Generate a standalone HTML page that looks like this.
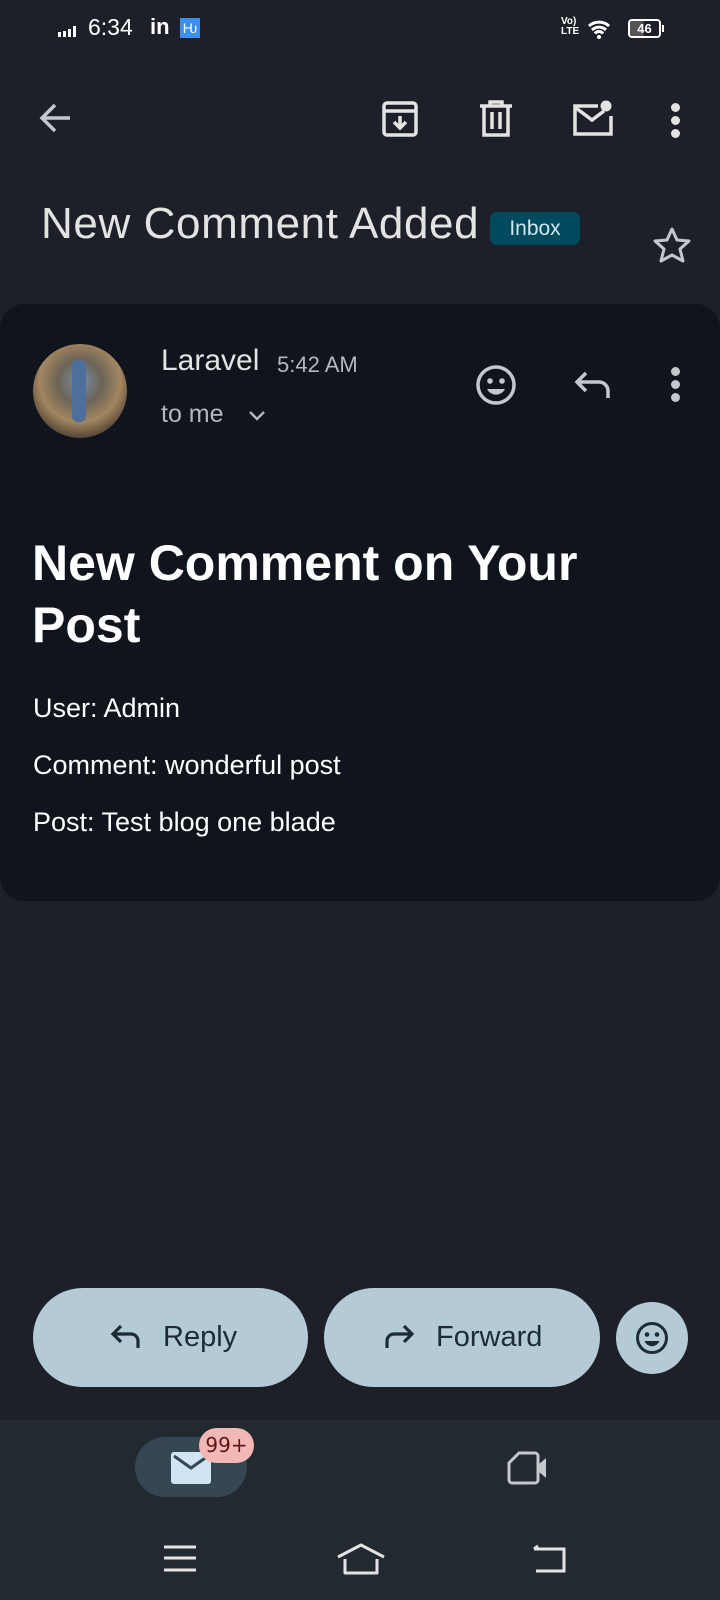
<!DOCTYPE html>
<html><head><meta charset="utf-8"><style>
*{margin:0;padding:0;box-sizing:border-box}
body{width:720px;height:1600px;background:#1d2028;font-family:"Liberation Sans",sans-serif;color:#e3e3e3;position:relative;overflow:hidden}
.a{position:absolute}
svg{position:absolute;overflow:visible}
</style></head><body>
<!-- status bar -->
<div class="a" style="left:58px;top:26px;display:flex;gap:2px;align-items:flex-end">
<i style="width:3px;height:5px;background:#fff"></i><i style="width:3px;height:6px;background:#fff"></i><i style="width:3px;height:8px;background:#fff"></i><i style="width:3px;height:11px;background:#fff"></i></div>
<div class="a" style="left:88px;top:14px;font-size:23px;color:#fff">6:34</div>
<div class="a" style="left:150px;top:14px;font-size:22px;color:#fff;font-weight:bold">in</div>
<div class="a" style="left:180px;top:18px;width:20px;height:20px;background:#3b8ff0;color:#fff;font-size:14px;text-align:center;line-height:20px">Ƕ</div>
<div class="a" style="left:561px;top:17px;font-size:10px;line-height:10px;color:#fff;font-weight:bold">Vo)<br>LTE</div>
<svg style="left:587px;top:18px" width="26" height="22" viewBox="0 0 26 22"><path d="M2 8a15 15 0 0 1 20 0M5 12a10 10 0 0 1 14 0M8 15.5a5 5 0 0 1 8 0" stroke="#fff" stroke-width="3" fill="none"/><circle cx="12" cy="19" r="2" fill="#fff"/></svg>
<div class="a" style="left:628px;top:19px;width:33px;height:19px;border:2px solid #fff;border-radius:4px;font-size:13px;font-weight:bold;color:#fff;text-align:center;line-height:15px;background:linear-gradient(90deg,#555 46%,transparent 46%)">46</div>
<div class="a" style="left:662px;top:25px;width:2px;height:7px;background:#fff"></div>
<!-- toolbar -->
<svg style="left:38px;top:102px" width="34" height="32" viewBox="0 0 34 32"><path d="M32 16H4M17 3L4 16l13 13" stroke="#c4c7cc" stroke-width="3.5" fill="none"/></svg>
<svg style="left:382px;top:101px" width="36" height="36" viewBox="0 0 36 36"><rect x="2" y="2" width="32" height="32" rx="3" stroke="#e3e3e3" stroke-width="3.5" fill="none"/><path d="M2 10h32M18 15v12M12 21l6 6 6-6" stroke="#e3e3e3" stroke-width="3.5" fill="none"/></svg>
<svg style="left:479px;top:101px" width="34" height="36" viewBox="0 0 34 36"><path d="M1 5h32M11 5V1h12v4M5 5v29h24V5M13 11v17M21 11v17" stroke="#e3e3e3" stroke-width="3.5" fill="none"/></svg>
<svg style="left:572px;top:100px" width="42" height="36" viewBox="0 0 42 36"><path d="M26 6H3v28h36V16" stroke="#e3e3e3" stroke-width="3.5" fill="none"/><path d="M4 8l16 12 12-9" stroke="#e3e3e3" stroke-width="3.5" fill="none"/><circle cx="34" cy="6" r="5.5" fill="#e3e3e3"/></svg>
<div class="a" style="left:671px;top:103px;width:9px;height:9px;border-radius:50%;background:#e3e3e3;box-shadow:0 13px 0 #e3e3e3,0 26px 0 #e3e3e3"></div>
<!-- title -->
<div class="a" style="left:41px;top:199px;font-size:44px;letter-spacing:0.6px;color:#e3e3e3">New Comment Added</div>
<div class="a" style="left:490px;top:212px;width:90px;height:33px;background:#004a5e;border-radius:7px;color:#cfe8f0;font-size:21px;text-align:center;line-height:33px">Inbox</div>
<svg style="left:653px;top:227px" width="38" height="36" viewBox="0 0 38 36"><path d="M19 2l5 11 12 1-9 8 3 12-11-6-11 6 3-12-9-8 12-1z" stroke="#c4c7cc" stroke-width="3" fill="none" stroke-linejoin="round"/></svg>
<!-- card -->
<div class="a" style="left:0;top:304px;width:720px;height:597px;background:#10141c;border-radius:24px"></div>
<div class="a" style="left:33px;top:344px;width:94px;height:94px;border-radius:50%;background:radial-gradient(circle at 50% 40%,#7b8da4 0,#6d6457 30%,#a28660 55%,#4a3b30 80%)"></div>
<div class="a" style="left:72px;top:360px;width:14px;height:62px;background:#4e6e9c;border-radius:6px"></div>
<div class="a" style="left:161px;top:344px;font-size:30px;color:#e3e3e3">Laravel</div>
<div class="a" style="left:277px;top:352px;font-size:22px;color:#b4b8bd">5:42 AM</div>
<div class="a" style="left:161px;top:400px;font-size:25px;color:#b4b8bd">to me</div>
<svg style="left:248px;top:410px" width="18" height="12" viewBox="0 0 18 12"><path d="M2 2l7 7 7-7" stroke="#b4b8bd" stroke-width="2.5" fill="none"/></svg>
<svg style="left:475px;top:364px" width="42" height="42" viewBox="0 0 42 42"><circle cx="21" cy="21" r="18" stroke="#c4c7cc" stroke-width="3.5" fill="none"/><circle cx="15" cy="17" r="2.8" fill="#c4c7cc"/><circle cx="27" cy="17" r="2.8" fill="#c4c7cc"/><path d="M12 25a10 10 0 0 0 18 0z" fill="#c4c7cc"/></svg>
<svg style="left:574px;top:370px" width="38" height="30" viewBox="0 0 38 30"><path d="M12 3L3 12l9 9M3 12h22a9 9 0 0 1 9 9v7" stroke="#c4c7cc" stroke-width="3.5" fill="none"/></svg>
<div class="a" style="left:671px;top:367px;width:9px;height:9px;border-radius:50%;background:#c4c7cc;box-shadow:0 13px 0 #c4c7cc,0 26px 0 #c4c7cc"></div>
<div class="a" style="left:32px;top:532px;font-size:50px;line-height:62px;color:#fff;font-weight:bold;width:600px">New Comment on Your<br>Post</div>
<div class="a" style="left:33px;top:693px;font-size:27px;color:#fff">User: Admin</div>
<div class="a" style="left:33px;top:750px;font-size:27px;color:#fff">Comment: wonderful post</div>
<div class="a" style="left:33px;top:807px;font-size:27px;color:#fff">Post: Test blog one blade</div>
<!-- buttons -->
<div class="a" style="left:33px;top:1288px;width:275px;height:99px;border-radius:50px;background:#b4cad6;color:#1d2b35;font-size:29px;line-height:99px;padding-left:130px">Reply</div>
<svg style="left:110px;top:1323px" width="32" height="28" viewBox="0 0 32 28"><path d="M11 3L3 11l8 8M3 11h18a7 7 0 0 1 7 7v7" stroke="#1d2b35" stroke-width="3.2" fill="none"/></svg>
<div class="a" style="left:324px;top:1288px;width:276px;height:99px;border-radius:50px;background:#b4cad6;color:#1d2b35;font-size:29px;line-height:99px;padding-left:112px">Forward</div>
<svg style="left:383px;top:1323px" width="32" height="28" viewBox="0 0 32 28"><path d="M21 3l8 8-8 8M29 11H11a7 7 0 0 0-7 7v7" stroke="#1d2b35" stroke-width="3.2" fill="none"/></svg>
<div class="a" style="left:616px;top:1302px;width:72px;height:72px;border-radius:50%;background:#b4cad6"></div>
<svg style="left:635px;top:1321px" width="34" height="34" viewBox="0 0 34 34"><circle cx="17" cy="17" r="14.5" stroke="#1d2b35" stroke-width="3" fill="none"/><circle cx="12" cy="13.5" r="2.3" fill="#1d2b35"/><circle cx="22" cy="13.5" r="2.3" fill="#1d2b35"/><path d="M9.5 20a8 8 0 0 0 15 0z" fill="#1d2b35"/></svg>
<!-- bottom nav -->
<div class="a" style="left:0;top:1420px;width:720px;height:180px;background:#232930"></div>
<div class="a" style="left:135px;top:1437px;width:112px;height:60px;border-radius:30px;background:#344753"></div>
<div class="a" style="left:171px;top:1452px;width:40px;height:32px;border-radius:3px;background:#d0e4f4"></div>
<svg style="left:171px;top:1452px" width="40" height="20" viewBox="0 0 40 20"><path d="M3 4l17 12 17-12" stroke="#344753" stroke-width="3" fill="none"/></svg>
<div class="a" style="left:199px;top:1428px;width:55px;height:35px;border-radius:18px;background:#f2b8b5;color:#601410;font-size:20px;text-align:center;line-height:35px;font-family:'DejaVu Sans',sans-serif">99+</div>
<svg style="left:507px;top:1451px" width="42" height="34" viewBox="0 0 42 34"><path d="M12 2h16a3 3 0 0 1 3 3v24a3 3 0 0 1-3 3H5a3 3 0 0 1-3-3V12z" stroke="#c4c7cc" stroke-width="3" fill="none"/><path d="M31 14l8-7v20l-8-7z" fill="#c4c7cc"/></svg>
<!-- system nav -->
<svg style="left:163px;top:1545px" width="34" height="28" viewBox="0 0 34 28"><path d="M1 2h32M1 13h32M1 25h32" stroke="#e3e3e3" stroke-width="3" fill="none"/></svg>
<svg style="left:336px;top:1543px" width="50" height="32" viewBox="0 0 50 32"><path d="M2 14L25 2l23 12M9 16v14h32V16" stroke="#e3e3e3" stroke-width="3" fill="none" stroke-linejoin="round"/></svg>
<svg style="left:530px;top:1545px" width="36" height="28" viewBox="0 0 36 28"><path d="M4 4h30v22H6M4 4l4-3" stroke="#e3e3e3" stroke-width="3" fill="none"/></svg>
</body></html>
